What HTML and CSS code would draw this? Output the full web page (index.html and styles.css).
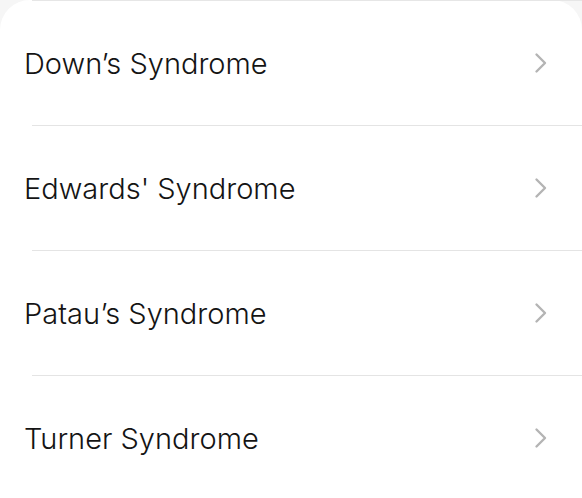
FILE: index.html
```html
<!DOCTYPE html>
<html lang="en">
<head>
<meta charset="utf-8">
<link rel="stylesheet" href="styles.css">
</head>
<body>
<div class="card">
  <ul class="list">
    <li class="row"><span class="label">Down’s Syndrome</span><svg class="chev" viewBox="0 0 14 22" width="14" height="22"><path d="M2.5 2.5 L11 11 L2.5 19.5" fill="none" stroke="#b4b4b4" stroke-width="2.4" stroke-linecap="round" stroke-linejoin="round"/></svg></li>
    <li class="row"><span class="label">Edwards' Syndrome</span><svg class="chev" viewBox="0 0 14 22" width="14" height="22"><path d="M2.5 2.5 L11 11 L2.5 19.5" fill="none" stroke="#b4b4b4" stroke-width="2.4" stroke-linecap="round" stroke-linejoin="round"/></svg></li>
    <li class="row"><span class="label">Patau’s Syndrome</span><svg class="chev" viewBox="0 0 14 22" width="14" height="22"><path d="M2.5 2.5 L11 11 L2.5 19.5" fill="none" stroke="#b4b4b4" stroke-width="2.4" stroke-linecap="round" stroke-linejoin="round"/></svg></li>
    <li class="row"><span class="label">Turner Syndrome</span><svg class="chev" viewBox="0 0 14 22" width="14" height="22"><path d="M2.5 2.5 L11 11 L2.5 19.5" fill="none" stroke="#b4b4b4" stroke-width="2.4" stroke-linecap="round" stroke-linejoin="round"/></svg></li>
  </ul>
</div>
</body>
</html>
```
FILE: styles.css
```css
html, body {
  margin: 0;
  padding: 0;
  background: #f6f6f6;
  height: 100%;
  overflow: hidden;
}
.card {
  background: #ffffff;
  border-radius: 30px 30px 0 0;
  min-height: 100%;
}
.list {
  list-style: none;
  margin: 0;
  padding: 0;
}
.row {
  display: flex;
  align-items: center;
  justify-content: space-between;
  height: 124px;
  margin-left: 32px;
  padding-right: 34px;
  border-bottom: 1px solid #e4e4e4;
}
.row:first-child {
  border-top: 1px solid #e6e6e6;
}
.label {
  margin-left: -8px;
  font-family: Inter, "Noto Sans", sans-serif;
  font-size: 29px;
  font-weight: 350;
  color: #141414;
}
.chev {
  display: block;
}
```
